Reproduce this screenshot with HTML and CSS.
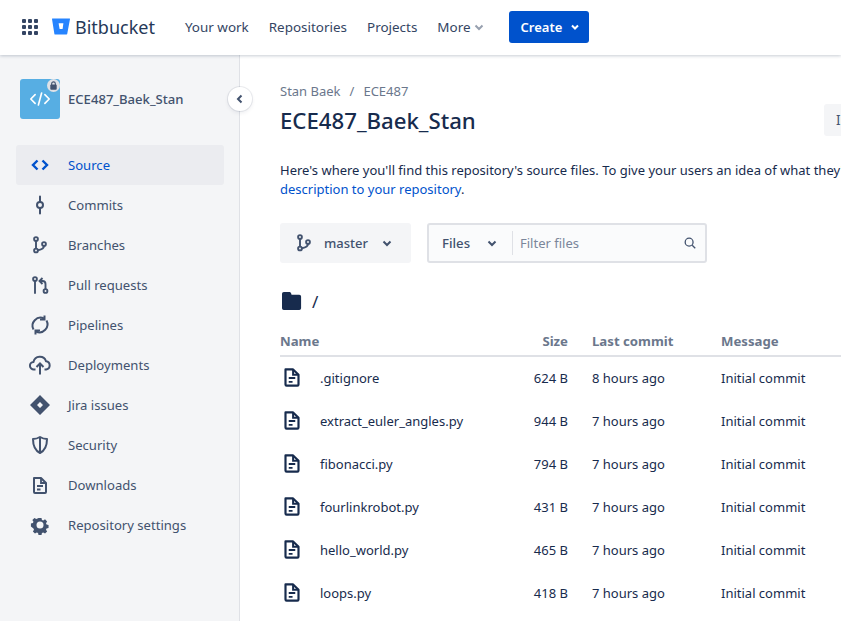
FILE: index.html
```html
<!DOCTYPE html>
<html lang="en">
<head>
    <meta charset="UTF-8">
    <title>ECE487_Baek_Stan — Bitbucket</title>
    <link rel="stylesheet" href="styles.css">
</head>
<body>
    <svg class="sprites" width="0" height="0">
        <symbol id="i-file" viewBox="0 0 24 24"><path d="M6 5h7l5 5v9a1 1 0 0 1-1 1H7a1 1 0 0 1-1-1z" fill="none" stroke="currentColor" stroke-width="2" stroke-linejoin="round"/><path d="M13 5v5h5M9 13h6M9 16.500h3.500" fill="none" stroke="currentColor" stroke-width="1.800"/></symbol>
        <symbol id="i-branch" viewBox="0 0 24 24"><g fill="none" stroke="currentColor" stroke-width="1.900"><circle cx="8" cy="6" r="1.900"/><circle cx="8" cy="17.500" r="1.900"/><circle cx="16" cy="11" r="1.900"/><path d="M8 8v7.500M16 13c0 2.500-2.500 3.500-6 4.200"/></g></symbol>
    </svg>
    <header class="topbar">
        <svg class="apps" viewBox="0 0 16 16"><g fill="currentColor"><rect x="0" y="0" width="4" height="4" rx="1"/><rect x="6" y="0" width="4" height="4" rx="1"/><rect x="12" y="0" width="4" height="4" rx="1"/><rect x="0" y="6" width="4" height="4" rx="1"/><rect x="6" y="6" width="4" height="4" rx="1"/><rect x="12" y="6" width="4" height="4" rx="1"/><rect x="0" y="12" width="4" height="4" rx="1"/><rect x="6" y="12" width="4" height="4" rx="1"/><rect x="12" y="12" width="4" height="4" rx="1"/></g></svg>
        <div class="brand">
            <svg class="brand-mark" viewBox="0 0 18 17"><path d="M.6.4A.55.55 0 0 0 0 1l2.400 14.900c.1.400.4.700.8.700h11.400c.3 0 .5-.2.600-.5L18 1a.55.55 0 0 0-.6-.6H.6z" fill="#2684ff"/><path d="M11.400 5.200H6.600l1 5.800h3z" fill="#fff"/></svg>
            <span>Bitbucket</span>
        </div>
        <nav class="topnav">
            <a>Your work</a>
            <a>Repositories</a>
            <a>Projects</a>
            <a class="more">More <svg viewBox="0 0 12 12"><path d="M2.500 4.500 6 8l3.500-3.500" fill="none" stroke="currentColor" stroke-width="2"/></svg></a>
        </nav>
        <button class="create">Create <svg viewBox="0 0 12 12"><path d="M3 4.500 6 7.500l3-3" fill="none" stroke="currentColor" stroke-width="2"/></svg></button>
    </header>
    <div class="layout">
        <aside class="sidebar">
            <div class="repo">
                <div class="repo-avatar">
                    <svg viewBox="0 0 24 24"><path d="M7.500 8 3.500 12l4 4M16.500 8l4 4-4 4M13.500 6.500l-3 11" fill="none" stroke="#fff" stroke-width="1.500" stroke-linecap="round" stroke-linejoin="round"/></svg>
                    <span class="lock"><svg viewBox="0 0 12 12"><path d="M4 5.500V4a2 2 0 0 1 4 0v1.500" fill="none" stroke="#42526e" stroke-width="1.200"/><rect x="2.500" y="5" width="7" height="5.500" rx="1" fill="#42526e"/></svg></span>
                </div>
                <span class="repo-name">ECE487_Baek_Stan</span>
                <button class="collapse"><svg viewBox="0 0 12 12"><path d="M7.500 2.500 4 6l3.500 3.500" fill="none" stroke="currentColor" stroke-width="2"/></svg></button>
            </div>
            <ul class="sidenav">
                <li class="active"><svg viewBox="0 0 24 24"><path d="M9.500 7.500 5 12l4.500 4.500M14.500 7.500 19 12l-4.500 4.500" fill="none" stroke="currentColor" stroke-width="2.400"/></svg>Source</li>
                <li><svg viewBox="0 0 24 24"><g fill="none" stroke="currentColor" stroke-width="2"><circle cx="12" cy="12" r="3"/><path d="M12 3.500V9M12 15v5.500" stroke-linecap="round"/></g></svg>Commits</li>
                <li><svg viewBox="0 0 24 24"><use href="#i-branch"/></svg>Branches</li>
                <li><svg viewBox="0 0 24 24"><g fill="none" stroke="currentColor" stroke-width="1.900"><circle cx="7" cy="6" r="1.900"/><path d="M7 8v12" stroke-linecap="round"/><circle cx="17.500" cy="18" r="1.900"/><path d="M17.500 16v-5c0-2-1-3-3-3h-2.500M14.500 5l-3 3 3 3"/></g></svg>Pull requests</li>
                <li><svg viewBox="0 0 24 24"><g fill="none" stroke="currentColor" stroke-width="2"><path d="M5.500 16.500a8 8 0 0 1 10.500-11M18.500 7.500a8 8 0 0 1-10.500 11"/><path d="M16.500 2.500v4h-4.500M7.500 21.500v-4h4.500"/></g></svg>Pipelines</li>
                <li><svg viewBox="0 0 24 24"><path d="M7.500 16.500H6A3.800 3.800 0 0 1 5.500 8.900 6.500 6.500 0 0 1 18 8.200a4.200 4.200 0 0 1 .2 8.300H16.500M12 21.500V11M8.500 14l3.500-3.500 3.500 3.500" fill="none" stroke="currentColor" stroke-width="2"/></svg>Deployments</li>
                <li><svg viewBox="0 0 24 24"><path fill-rule="evenodd" d="M12 2 22 12 12 22 2 12zM12 9l-3 3 3 3 3-3z" fill="currentColor"/></svg>Jira issues</li>
                <li><svg viewBox="0 0 24 24"><g fill="none" stroke="currentColor" stroke-width="2" stroke-linejoin="round"><path d="M5 6c3 0 5-.8 7-2 2 1.200 4 2 7 2 0 7-2 11.500-7 14-5-2.500-7-7-7-14z"/><path d="M12 4v16"/></g></svg>Security</li>
                <li><svg viewBox="0 0 24 24"><use href="#i-file"/></svg>Downloads</li>
                <li><svg viewBox="0 0 24 24"><path fill-rule="evenodd" d="M10 2.500h4l.6 2.700 1.700.7 2.400-1.500 2.800 2.800-1.500 2.400.7 1.700 2.700.6v4l-2.700.6-.7 1.700 1.500 2.400-2.800 2.800-2.400-1.500-1.700.7-.6 2.700h-4l-.6-2.700-1.700-.7-2.400 1.500-2.800-2.800 1.500-2.400-.7-1.700L-.1 14v-4l2.700-.6.7-1.700-1.500-2.400 2.800-2.800 2.400 1.500 1.700-.7z" transform="translate(3 3) scale(.75)" fill="currentColor"/><circle cx="12" cy="12" r="3.500" fill="#f4f5f7"/></svg>Repository settings</li>
            </ul>
        </aside>
        <main class="content">
            <div class="crumbs">Stan Baek<span class="sep">/</span>ECE487</div>
            <div class="title-row">
                <h1>ECE487_Baek_Stan</h1>
                <button class="clone">Import</button>
            </div>
            <p class="intro">Here's where you'll find this repository's source files. To give your users an idea of what they'll find here, add a <a>description to your repository</a>.</p>
            <div class="filters">
                <button class="branch-btn"><svg class="branch-icon" viewBox="0 0 24 24"><use href="#i-branch"/></svg>master<svg class="chev" viewBox="0 0 12 12"><path d="M2.500 4.500 6 8l3.500-3.500" fill="none" stroke="currentColor" stroke-width="2"/></svg></button>
                <div class="search">
                    <span class="search-type">Files<svg class="chev" viewBox="0 0 12 12"><path d="M2.500 4.500 6 8l3.500-3.500" fill="none" stroke="currentColor" stroke-width="2"/></svg></span>
                    <span class="search-text">Filter files</span>
                    <svg class="search-icon" viewBox="0 0 16 16"><circle cx="7" cy="7" r="4.500" fill="none" stroke="currentColor" stroke-width="1.500"/><path d="m10.500 10.500 3.500 3.500" stroke="currentColor" stroke-width="1.500"/></svg>
                </div>
            </div>
            <div class="path">
                <svg viewBox="0 0 22 20" preserveAspectRatio="none"><path d="M2 0h6c1 0 1.500.5 2 1.500L10.500 3H19a2 2 0 0 1 2 2v13a2 2 0 0 1-2 2H2a2 2 0 0 1-2-2V2a2 2 0 0 1 2-2z" fill="#172b4d"/></svg>
                <span>/</span>
            </div>
            <table class="files">
                <thead>
                    <tr><th class="c-name">Name</th><th class="c-size">Size</th><th class="c-time">Last commit</th><th>Message</th></tr>
                </thead>
                <tbody>
                    <tr><td class="c-name"><svg viewBox="0 0 24 24"><use href="#i-file"/></svg>.gitignore</td><td class="c-size">624 B</td><td class="c-time">8 hours ago</td><td>Initial commit</td></tr>
                    <tr><td class="c-name"><svg viewBox="0 0 24 24"><use href="#i-file"/></svg>extract_euler_angles.py</td><td class="c-size">944 B</td><td class="c-time">7 hours ago</td><td>Initial commit</td></tr>
                    <tr><td class="c-name"><svg viewBox="0 0 24 24"><use href="#i-file"/></svg>fibonacci.py</td><td class="c-size">794 B</td><td class="c-time">7 hours ago</td><td>Initial commit</td></tr>
                    <tr><td class="c-name"><svg viewBox="0 0 24 24"><use href="#i-file"/></svg>fourlinkrobot.py</td><td class="c-size">431 B</td><td class="c-time">7 hours ago</td><td>Initial commit</td></tr>
                    <tr><td class="c-name"><svg viewBox="0 0 24 24"><use href="#i-file"/></svg>hello_world.py</td><td class="c-size">465 B</td><td class="c-time">7 hours ago</td><td>Initial commit</td></tr>
                    <tr><td class="c-name"><svg viewBox="0 0 24 24"><use href="#i-file"/></svg>loops.py</td><td class="c-size">418 B</td><td class="c-time">7 hours ago</td><td>Initial commit</td></tr>
                </tbody>
            </table>
        </main>
    </div>
</body>
</html>
```

FILE: styles.css
```css
html, body {
    height: 100%;
}
body {
    margin: 0;
    overflow: hidden;
    font-family: "Noto Sans", Arial, sans-serif;
    font-size: 13.5px;
    color: #172b4d;
    background: #fff;
}
.sprites {
    position: absolute;
}
button {
    font-family: inherit;
    border: 0;
    padding: 0;
}

/* top bar */
.topbar {
    position: relative;
    z-index: 2;
    display: flex;
    align-items: center;
    height: 55px;
    box-sizing: border-box;
    padding: 0 0 2px 22px;
    background: #fff;
    box-shadow: 0 1px 3px rgba(9, 30, 66, 0.22);
}
.apps {
    width: 16px;
    height: 16px;
    color: #344563;
}
.brand {
    display: flex;
    align-items: center;
    margin-left: 14px;
    font-size: 18px;
    color: #253858;
}
.brand-mark {
    width: 18px;
    height: 17px;
    margin-right: 5px;
}
.topnav {
    display: flex;
    gap: 20px;
    margin-left: 30px;
    font-size: 13.45px;
}
.topnav a {
    color: #344563;
}
.more {
    display: flex;
    align-items: center;
    gap: 2px;
}
.more svg {
    width: 12px;
    height: 12px;
    color: #97a0af;
}
.create {
    display: flex;
    align-items: center;
    justify-content: space-between;
    width: 80px;
    height: 32px;
    margin-left: 24px;
    padding: 0 8px 0 12px;
    box-sizing: border-box;
    border-radius: 3px;
    background: #0052cc;
    color: #fff;
    font-size: 13px;
    font-weight: 600;
}
.create svg {
    width: 12px;
    height: 12px;
}

.layout {
    display: flex;
    height: 566px;
}

/* sidebar */
.sidebar {
    flex: 0 0 240px;
    padding: 24px 15px 0 16px;
    box-sizing: border-box;
    background: #f4f5f7;
    border-right: 1px solid #dfe1e6;
}
.repo {
    position: relative;
    display: flex;
    align-items: center;
    height: 40px;
    padding-left: 4px;
    margin-bottom: 26px;
}
.repo-avatar {
    position: relative;
    width: 40px;
    height: 40px;
    margin-right: 8px;
    border-radius: 3px;
    background: #57aee3;
}
.repo-avatar > svg {
    display: block;
    width: 26px;
    height: 26px;
    padding: 7px;
}
.lock {
    position: absolute;
    top: 0;
    right: 0;
    width: 13px;
    height: 13px;
    border-radius: 50%;
    background: #dfe1e6;
}
.lock svg {
    display: block;
    width: 11px;
    height: 11px;
    margin: 1px;
}
.repo-name {
    font-size: 13.1px;
    font-weight: 500;
    color: #42526e;
}
.collapse {
    position: absolute;
    left: 212px;
    top: 8px;
    width: 24px;
    height: 24px;
    border-radius: 50%;
    background: #fff;
    color: #42526e;
    box-shadow: 0 0 0 1px rgba(9, 30, 66, 0.08), 0 2px 4px rgba(9, 30, 66, 0.08);
}
.collapse svg {
    display: block;
    width: 12px;
    height: 12px;
    margin: auto;
}
.sidenav {
    list-style: none;
    margin: 0;
    padding: 0;
}
.sidenav li {
    display: flex;
    align-items: center;
    height: 40px;
    padding-left: 12px;
    border-radius: 3px;
    color: #42526e;
    font-size: 13.1px;
}
.sidenav li svg {
    flex: none;
    width: 24px;
    height: 24px;
    margin-right: 16px;
}
.sidenav .active {
    background: #ebecf0;
    color: #0052cc;
}

/* main content */
.content {
    flex: 1;
    min-width: 0;
    padding: 27px 0 0 40px;
    overflow: hidden;
}
.crumbs {
    font-size: 13px;
    line-height: 18px;
    color: #6b778c;
}
.sep {
    margin: 0 9px;
}
.title-row {
    display: flex;
    align-items: center;
    justify-content: space-between;
    height: 32px;
    margin-top: 4px;
}
h1 {
    margin: 0;
    font-size: 22.2px;
    font-weight: 500;
    color: #172b4d;
}
.clone {
    flex: none;
    width: 60px;
    height: 32px;
    margin: 0 -43px 0 0;
    padding-left: 12px;
    text-align: left;
    border-radius: 3px;
    background: #f4f5f7;
    color: #42526e;
    font-size: 13.5px;
}
.intro {
    width: 700px;
    margin: 25px 0 0;
    font-size: 13px;
    line-height: 19px;
    color: #172b4d;
}
.intro a {
    color: #0052cc;
}
.filters {
    display: flex;
    gap: 16px;
    margin-top: 24px;
}
.branch-btn {
    display: flex;
    align-items: center;
    width: 131px;
    height: 40px;
    padding-left: 12px;
    box-sizing: border-box;
    border-radius: 3px;
    background: #f4f5f7;
    color: #42526e;
    font-size: 13px;
    font-weight: 500;
}
.branch-icon {
    width: 24px;
    height: 24px;
    margin-right: 8px;
}
.chev {
    width: 12px;
    height: 12px;
}
.branch-btn .chev {
    margin-left: 13px;
}
.search {
    display: flex;
    align-items: center;
    width: 280px;
    height: 40px;
    box-sizing: border-box;
    border: 2px solid #dfe1e6;
    border-radius: 3px;
    background: #fafbfc;
}
.search-type {
    display: flex;
    align-items: center;
    justify-content: space-between;
    width: 84px;
    height: 24px;
    padding: 0 14px 0 13px;
    box-sizing: border-box;
    border-right: 1px solid #dfe1e6;
    color: #42526e;
    font-size: 13.2px;
    font-weight: 500;
}
.search-text {
    flex: 1;
    padding-left: 7px;
    font-size: 13px;
    color: #7a869a;
}
.search-icon {
    width: 14px;
    height: 14px;
    margin-right: 8px;
    color: #42526e;
}
.path {
    display: flex;
    align-items: center;
    gap: 10px;
    height: 20px;
    margin-top: 28px;
    padding-left: 2px;
    font-size: 17px;
    color: #172b4d;
}
.path svg {
    width: 20px;
    height: 18px;
}
.files {
    width: 600px;
    margin-top: 16px;
    border-collapse: collapse;
    table-layout: fixed;
    font-size: 13px;
}
.files th {
    height: 28px;
    padding: 0;
    text-align: left;
    color: #6b778c;
    font-size: 13.2px;
    font-weight: 700;
    border-bottom: 2px solid #dfe1e6;
}
.files td {
    height: 41px;
    padding: 0 0 2px;
    color: #172b4d;
}
.c-name {
    width: 234px;
}
.files td.c-name {
    display: flex;
    align-items: center;
}
.c-name svg {
    flex: none;
    width: 26px;
    height: 26px;
    margin: 0 15px 2px -1px;
    color: #172b4d;
}
.files .c-size {
    width: 54px;
    text-align: right;
}
.files .c-time {
    width: 153px;
    padding-left: 24px;
    box-sizing: border-box;
}
```
